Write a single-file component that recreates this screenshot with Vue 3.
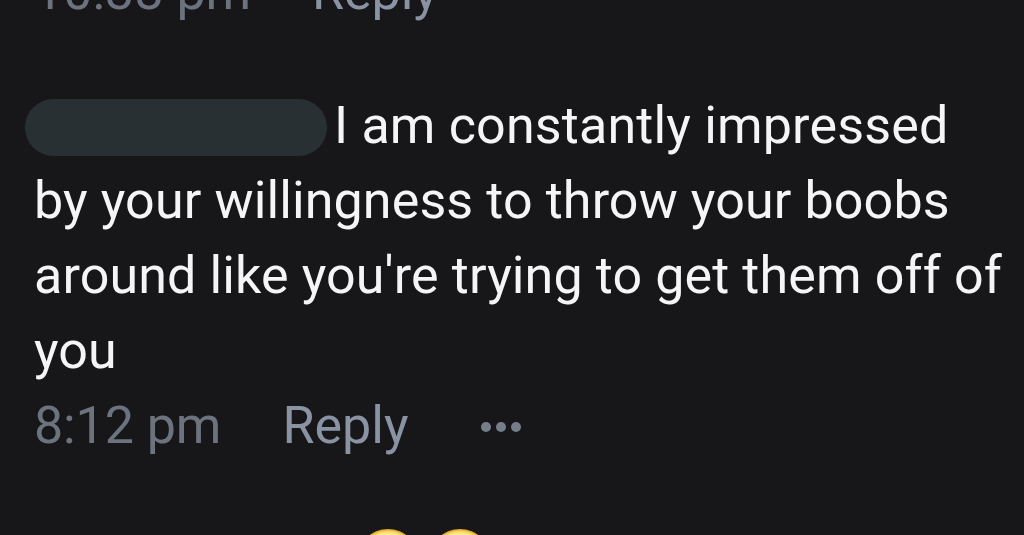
<template>
  <main class="thread">
    <div class="meta previous">
      <span class="time">10:38 pm</span>
      <button class="reply">Reply</button>
    </div>
    <article class="comment">
      <p class="line first"><span class="name"></span><span>I am constantly impressed</span></p>
      <p class="line">by your willingness to throw your boobs</p>
      <p class="line">around like you're trying to get them off of</p>
      <p class="line">you</p>
      <div class="meta">
        <span class="time">8:12 pm</span>
        <button class="reply">Reply</button>
        <button class="more" aria-label="More">
          <svg width="42" height="12" viewBox="0 0 42 12">
            <circle cx="6" cy="6" r="5" />
            <circle cx="21" cy="6" r="5" />
            <circle cx="36" cy="6" r="5" />
          </svg>
        </button>
      </div>
    </article>
    <div class="reactions">
      <svg v-for="n in 2" :key="n" width="62" height="62" viewBox="0 0 62 62">
        <defs>
          <radialGradient :id="'face' + n" cx="50%" cy="50%" r="50%">
            <stop offset="0.8" stop-color="#fff0a0" />
            <stop offset="0.91" stop-color="#fbdc68" />
            <stop offset="1" stop-color="#d99a25" />
          </radialGradient>
        </defs>
        <circle cx="31" cy="31" r="31" :fill="`url(#face${n})`" />
      </svg>
    </div>
  </main>
</template>

<script setup>
</script>

<style>
body {
  margin: 0;
  background: #171719;
}
</style>

<style scoped>
.thread {
  height: 535px;
  overflow: hidden;
  display: flex;
  flex-direction: column;
  background: #171719;
  font-family: Roboto, sans-serif;
  font-size: 52px;
  color: #f5f5f8;
}

.comment {
  padding-left: 34px;
  margin-top: 59px;
}

.line {
  height: 75px;
  margin: 0;
  line-height: 75px;
  letter-spacing: 0.12px;
  white-space: nowrap;
}

.first {
  display: flex;
  align-items: center;
  letter-spacing: 0.17px;
}

.name {
  width: 302px;
  height: 57px;
  margin: 3px 7.5px 0 -9.5px;
  border-radius: 29px;
  background: #293034;
}

.meta {
  display: flex;
  align-items: center;
  flex-shrink: 0;
  height: 75px;
  line-height: 75px;
}

.time {
  width: 248.5px;
  color: #6d737e;
  letter-spacing: -0.1px;
}

.previous {
  margin-top: -46px;
  padding-left: 34px;
}

.previous .time {
  width: 278px;
  letter-spacing: 0;
}

.reply,
.more {
  padding: 0;
  border: 0;
  background: none;
  font: inherit;
  color: #8a93a3;
}

.more {
  display: flex;
  margin: 3px 0 0 71px;
  fill: #777e8b;
}

.reactions {
  display: flex;
  gap: 10px;
  margin: 66px 0 0 357px;
}
</style>
